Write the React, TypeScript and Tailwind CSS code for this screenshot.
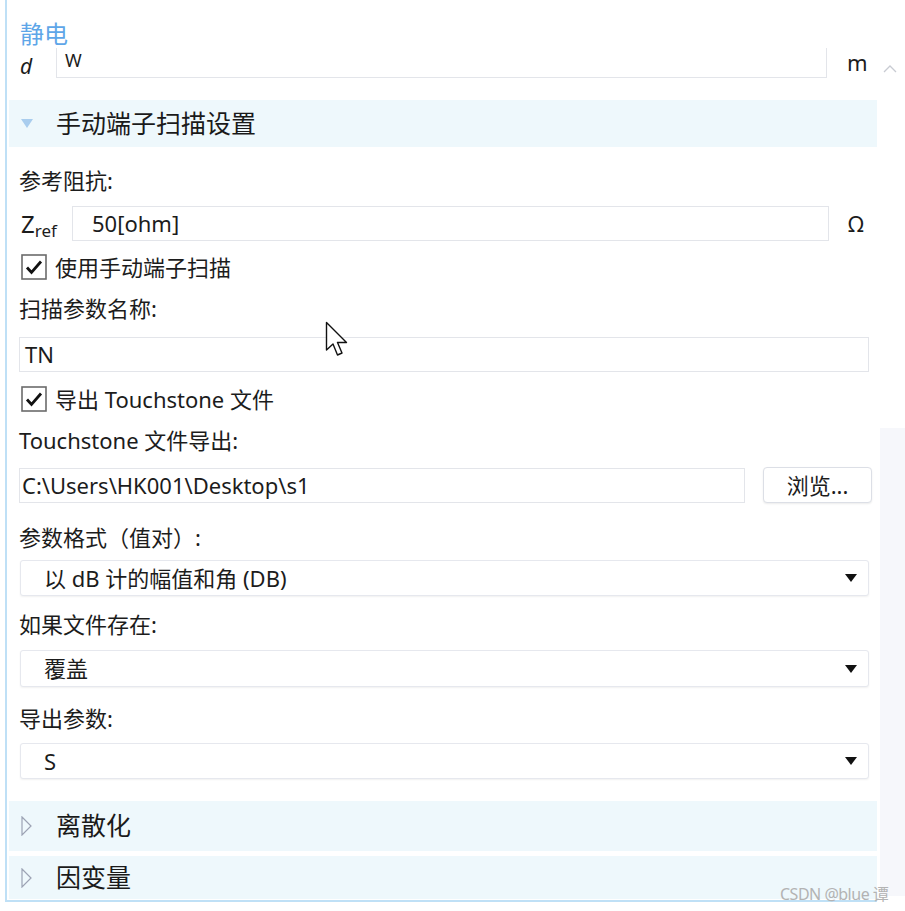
import React from 'react';

const font = { fontFamily: '"Noto Sans", "Noto Sans CJK SC", sans-serif' };

const Check: React.FC = () => (
  <svg width="26" height="26" viewBox="0 0 26 26">
    <rect x="1" y="1" width="24" height="24" fill="#fff" stroke="#6b6b6b" strokeWidth="1.6" />
    <path d="M6 13.5 L10.5 18.5 L20 7.5" fill="none" stroke="#111" strokeWidth="2.8" />
  </svg>
);

const DropArrow: React.FC = () => (
  <svg width="12" height="8" viewBox="0 0 12 8">
    <path d="M0 0 H12 L6 8 Z" fill="#111" />
  </svg>
);

const Label: React.FC<{ text: string; mt: string }> = ({ text, mt }) => (
  <div className={`${mt} flex h-[32px] items-center pl-[12px] text-[22px] text-[#1c1c1c]`}>{text}</div>
);

const Select: React.FC<{ value: string; mt: string; h: string }> = ({ value, mt, h }) => (
  <div
    className={`${mt} ${h} ml-[13px] flex w-[849px] items-center justify-between rounded-[3px] border border-[#e6e8ee] bg-white pl-[23px] pr-[11px] text-[22px] text-[#1c1c1c] shadow-[0_1px_2px_rgba(0,0,0,0.06)]`}
  >
    <span>{value}</span>
    <DropArrow />
  </div>
);

const Section: React.FC<{ title: string; open?: boolean; h: string; mt: string }> = ({ title, open, h, mt }) => (
  <div className={`${mt} ${h} ml-[2px] flex w-[868px] items-center bg-[#eef8fc]`}>
    <div className="flex w-[47px] pl-[12px]">
      {open ? (
        <svg width="12" height="9" viewBox="0 0 12 9">
          <path d="M0 0 H12 L6 9 Z" fill="#a9cdee" />
        </svg>
      ) : (
        <svg width="11" height="20" viewBox="0 0 11 20">
          <path d="M1 1 L10 10 L1 19 Z" fill="none" stroke="#9ca3b4" strokeWidth="1.2" />
        </svg>
      )}
    </div>
    <span className="text-[25px] text-[#1a1a1a]">{title}</span>
  </div>
);

export default function App() {
  return (
    <div className="relative h-[911px] w-[905px] overflow-hidden bg-white" style={font}>
      <div className="flex pl-[5px]">
        {/* Settings panel */}
        <div className="w-[872px] border-b-2 border-l-2 border-[#bfe0f6] pb-[1px]">
          <div className="h-[12px]" />
          <div className="mt-[8px] h-[28px] pl-[13px] text-[24px] leading-[28px] text-[#5ea6e8]">静电</div>

          <div className="flex h-[30px] items-end">
            <span className="w-[49px] pl-[13px] text-[21px] italic leading-[24px] text-[#1c1c1c]">d</span>
            <div className="h-[30px] w-[771px] border-x border-b border-[#e3e5ea]">
              <div className="pl-[8px] pt-[1px] text-[18px] leading-[22px] text-[#1c1c1c]">W</div>
            </div>
            <span className="-mb-[1px] pl-[20px] text-[22px] leading-[34px] text-[#1c1c1c]">m</span>
          </div>

          <Section title="手动端子扫描设置" open h="h-[47px]" mt="mt-[22px]" />

          <Label text="参考阻抗:" mt="mt-[17px]" />
          <div className="mt-[10px] flex h-[35px] items-center">
            <div className="w-[65px] pl-[14px] text-[24px] text-[#1c1c1c]">
              Z<sub className="text-[17px]">ref</sub>
            </div>
            <div className="flex h-[35px] w-[757px] items-center border border-[#e3e5ea] pl-[19px] text-[22px] text-[#1c1c1c]">
              50[ohm]
            </div>
            <span className="pl-[19px] text-[22px] text-[#1c1c1c]">Ω</span>
          </div>

          <div className="mt-[10px] flex h-[32px] items-center gap-[8px] pl-[14px] text-[22px] text-[#1c1c1c]">
            <Check />
            <span>使用手动端子扫描</span>
          </div>

          <Label text="扫描参数名称:" mt="mt-[9px]" />
          <div className="ml-[12px] mt-[13px] flex h-[35px] w-[850px] items-center border border-[#e3e5ea] pl-[5px] text-[22px] text-[#1c1c1c]">
            TN
          </div>

          <div className="mt-[11px] flex h-[32px] items-center gap-[8px] pl-[14px] text-[22px] text-[#1c1c1c]">
            <Check />
            <span>导出 Touchstone 文件</span>
          </div>

          <Label text="Touchstone 文件导出:" mt="mt-[9px]" />
          <div className="ml-[12px] mt-[11px] flex h-[36px] items-center gap-[18px]">
            <div className="flex h-[35px] w-[726px] items-center border border-[#e3e5ea] pl-[2px] text-[22px] text-[#1c1c1c]">
              C:\Users\HK001\Desktop\s1
            </div>
            <div className="flex h-[36px] w-[109px] items-center justify-center rounded-[4px] border border-[#dcdfe6] bg-white text-[22px] text-[#1c1c1c] shadow-[0_1px_2px_rgba(0,0,0,0.08)]">
              浏览...
            </div>
          </div>

          <Label text="参数格式（值对）:" mt="mt-[18px]" />
          <Select value="以 dB 计的幅值和角 (DB)" mt="mt-[7px]" h="h-[36px]" />

          <Label text="如果文件存在:" mt="mt-[12px]" />
          <Select value="覆盖" mt="mt-[10px]" h="h-[37px]" />

          <Label text="导出参数:" mt="mt-[15px]" />
          <Select value="S" mt="mt-[9px]" h="h-[36px]" />

          <Section title="离散化" h="h-[50px]" mt="mt-[22px]" />
          <Section title="因变量" h="h-[43px]" mt="mt-[5px]" />
        </div>

        {/* Scrollbar */}
        <div className="flex flex-1 flex-col">
          <div className="mt-[64px] flex justify-center pr-[2px]">
            <svg width="14" height="9" viewBox="0 0 14 9">
              <path d="M1 8 L7 2 L13 8" fill="none" stroke="#c8cbd2" strokeWidth="1.3" />
            </svg>
          </div>
          <div className="ml-[3px] mt-[355px] h-[468px] bg-[#f6f7fb]" />
        </div>
      </div>

      {/* Mouse pointer */}
      <svg className="absolute left-[325px] top-[321px]" width="26" height="38" viewBox="0 0 26 38">
        <path
          d="M1.5 1.5 L1.5 29 L8 23 L12.5 34 L17 32 L12.5 21.5 L21.5 21.5 Z"
          fill="#fff"
          stroke="#111"
          strokeWidth="1.4"
          strokeLinejoin="round"
        />
      </svg>

      {/* Watermark */}
      <div className="absolute left-[780px] top-[882px] text-[16px] tracking-[-0.5px] text-[#b3b3b3]">CSDN @blue 谭</div>
    </div>
  );
}
